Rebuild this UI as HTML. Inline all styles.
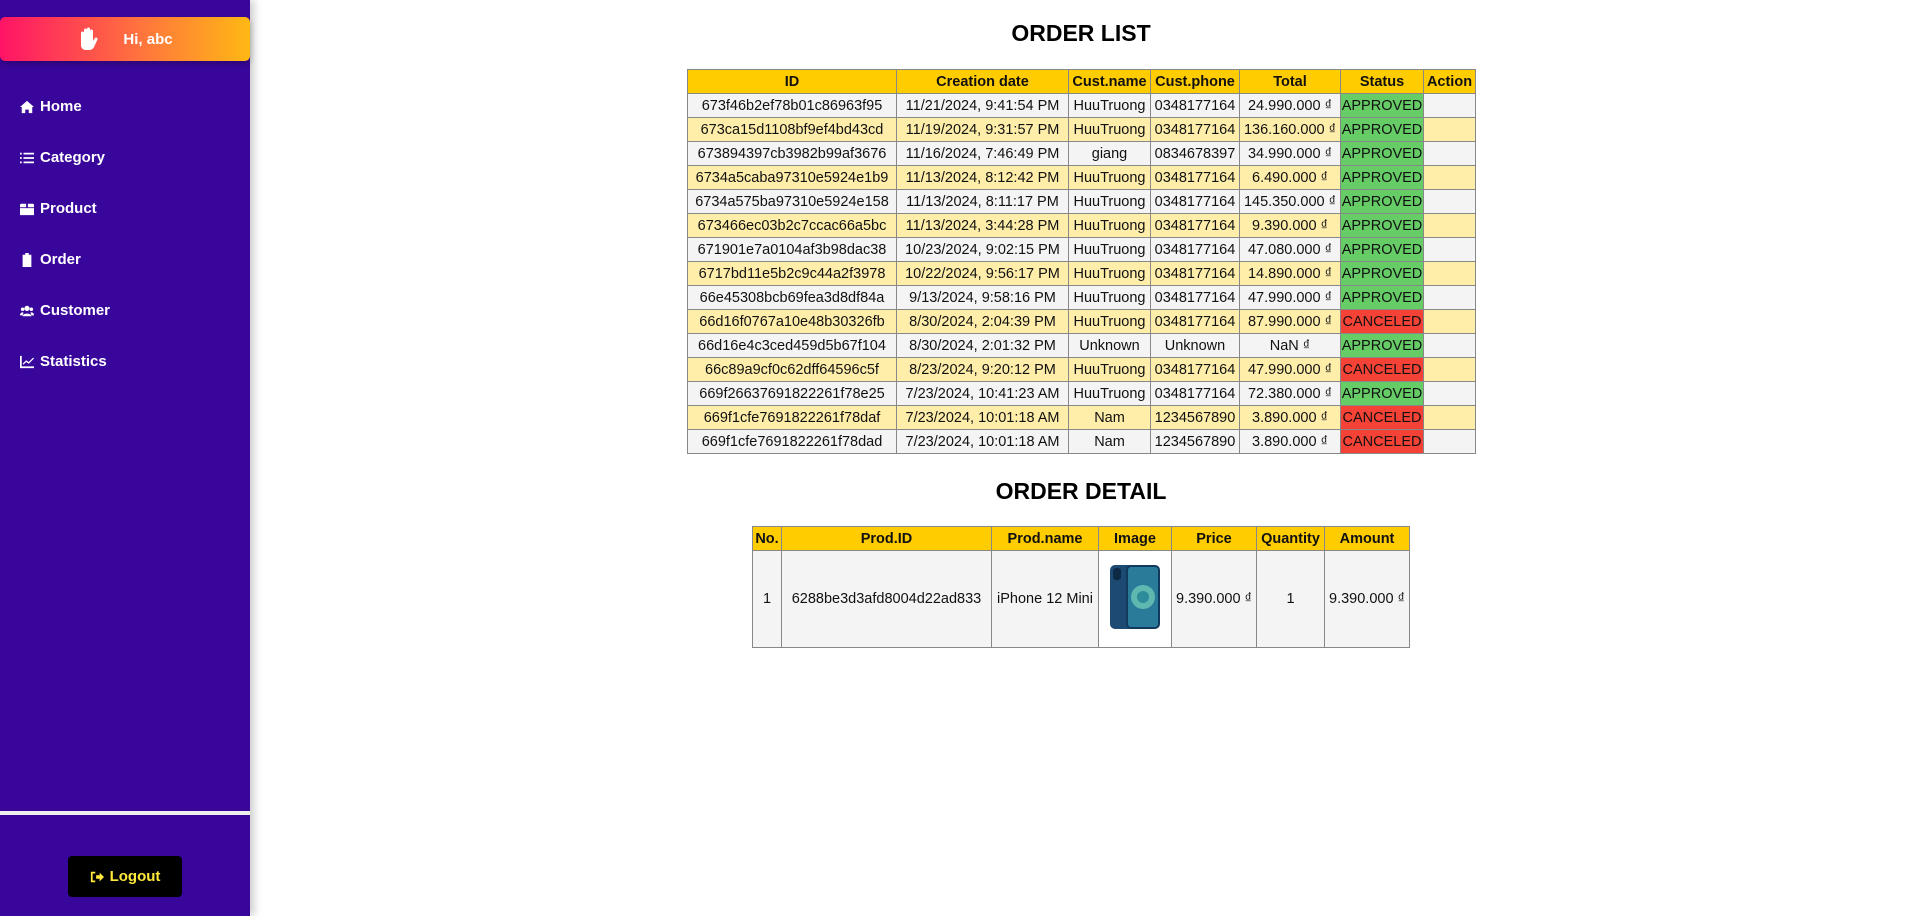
<!DOCTYPE html>
<html><head><meta charset="utf-8">
<style>
*{box-sizing:border-box;margin:0;padding:0}
body{width:1908px;height:916px;background:#fff;font-family:"Liberation Sans","DejaVu Sans",sans-serif;position:relative;overflow:hidden}
.side{position:absolute;left:0;top:0;width:250px;height:916px;background:#39069b;box-shadow:4px 0 8px rgba(0,0,0,.2)}
.hi{position:absolute;left:0;top:17px;width:250px;height:44px;border-radius:5px;background:linear-gradient(90deg,#ff1466,#ff7a3a 60%,#ffb814);color:#fff;font-weight:bold;font-size:15px;display:flex;align-items:center;justify-content:center;gap:24px;box-shadow:0 3px 6px rgba(0,0,0,.25)}
.nav{position:absolute;left:20px;color:#fff;font-weight:bold;font-size:15px;display:flex;align-items:center;gap:6px}
.nav svg{width:14px;height:14px;fill:#fff}
.div{position:absolute;left:0;top:811px;width:250px;height:4px;background:#eee}
.logout{position:absolute;left:68px;top:856px;width:114px;height:41px;background:#000;border-radius:4px;color:#ffe93a;font-weight:bold;font-size:15px;display:flex;align-items:center;justify-content:center;gap:6px}
h2{position:absolute;width:400px;text-align:center;font-size:23px;font-weight:bold;color:#000}
table{position:absolute;border-collapse:collapse;table-layout:fixed;font-size:14.5px;color:#111}
td,th{border:1px solid #888;text-align:center;white-space:nowrap;overflow:hidden;padding:0}
th{background:#ffcc00;font-weight:bold;height:24px}
td{height:24px}
tr.o td{background:#f4f4f4}
tr.e td{background:#ffeeaa}
tr td.ap{background:#6c6}
tr td.ca{background:#f44336}
</style></head><body>
<div class="side">
 <div class="hi"><svg width="22" height="24" viewBox="0 0 22 24"><path fill="#fff" d="M4 12V6a1.5 1.5 0 0 1 3 0v5V3a1.5 1.5 0 0 1 3 0v8V2a1.5 1.5 0 0 1 3 0v9V4a1.5 1.5 0 0 1 3 0v10l2-3a1.5 1.5 0 0 1 2.5 1.5L17 20c-1 2-3 3-5 3H9c-3 0-5-2-5-5z"/></svg><span>Hi, abc</span></div>
 <div class="nav" style="top:98px"><svg viewBox="0 0 16 16"><path d="M8 1 0 8h2v7h4v-4h4v4h4V8h2z"/></svg>Home</div>
 <div class="nav" style="top:149px"><svg viewBox="0 0 16 16"><path d="M0 2h2v2H0zM4 2h12v2H4zM0 7h2v2H0zM4 7h12v2H4zM0 12h2v2H0zM4 12h12v2H4z"/></svg>Category</div>
 <div class="nav" style="top:200px"><svg viewBox="0 0 16 16"><path d="M1 2h6v4H0V3zM9 2h6l1 1v3H9zM0 7h16v8H0z"/></svg>Product</div>
 <div class="nav" style="top:251px"><svg viewBox="0 0 16 16"><path d="M3 2h3V0h4v2h3v14H3zM5 6h6v1H5zM5 9h6v1H5zM5 12h6v1H5z"/></svg>Order</div>
 <div class="nav" style="top:302px"><svg viewBox="0 0 16 16"><circle cx="8" cy="5" r="3"/><circle cx="3" cy="6" r="2"/><circle cx="13" cy="6" r="2"/><path d="M3 14c0-4 10-4 10 0zM0 13c0-3 3-4 4-3l-1 3zM16 13c0-3-3-4-4-3l1 3z"/></svg>Customer</div>
 <div class="nav" style="top:353px"><svg viewBox="0 0 16 16"><path d="M0 1h2v12h14v2H0z"/><path d="M3 10l4-4 3 2 5-5 1 1-6 6-3-2-3 3z"/></svg>Statistics</div>
 <div class="div"></div>
 <div class="logout"><svg width="14" height="14" viewBox="0 0 16 16"><path fill="#ffe93a" d="M1 2h5v2H3v8h3v2H1zM7 6h4V3l5 5-5 5v-3H7z"/></svg>Logout</div>
</div>

<h2 style="left:881px;top:20px">ORDER LIST</h2>
<table style="left:687px;top:69px;width:788px">
<colgroup><col style="width:209px"><col style="width:172px"><col style="width:82px"><col style="width:89px"><col style="width:101px"><col style="width:83px"><col style="width:52px"></colgroup>
<tr><th>ID</th><th>Creation date</th><th>Cust.name</th><th>Cust.phone</th><th>Total</th><th>Status</th><th>Action</th></tr>
<tr class="o"><td>673f46b2ef78b01c86963f95</td><td>11/21/2024, 9:41:54 PM</td><td>HuuTruong</td><td>0348177164</td><td>24.990.000 ₫</td><td class="ap">APPROVED</td><td></td></tr>
<tr class="e"><td>673ca15d1108bf9ef4bd43cd</td><td>11/19/2024, 9:31:57 PM</td><td>HuuTruong</td><td>0348177164</td><td>136.160.000 ₫</td><td class="ap">APPROVED</td><td></td></tr>
<tr class="o"><td>673894397cb3982b99af3676</td><td>11/16/2024, 7:46:49 PM</td><td>giang</td><td>0834678397</td><td>34.990.000 ₫</td><td class="ap">APPROVED</td><td></td></tr>
<tr class="e"><td>6734a5caba97310e5924e1b9</td><td>11/13/2024, 8:12:42 PM</td><td>HuuTruong</td><td>0348177164</td><td>6.490.000 ₫</td><td class="ap">APPROVED</td><td></td></tr>
<tr class="o"><td>6734a575ba97310e5924e158</td><td>11/13/2024, 8:11:17 PM</td><td>HuuTruong</td><td>0348177164</td><td>145.350.000 ₫</td><td class="ap">APPROVED</td><td></td></tr>
<tr class="e"><td>673466ec03b2c7ccac66a5bc</td><td>11/13/2024, 3:44:28 PM</td><td>HuuTruong</td><td>0348177164</td><td>9.390.000 ₫</td><td class="ap">APPROVED</td><td></td></tr>
<tr class="o"><td>671901e7a0104af3b98dac38</td><td>10/23/2024, 9:02:15 PM</td><td>HuuTruong</td><td>0348177164</td><td>47.080.000 ₫</td><td class="ap">APPROVED</td><td></td></tr>
<tr class="e"><td>6717bd11e5b2c9c44a2f3978</td><td>10/22/2024, 9:56:17 PM</td><td>HuuTruong</td><td>0348177164</td><td>14.890.000 ₫</td><td class="ap">APPROVED</td><td></td></tr>
<tr class="o"><td>66e45308bcb69fea3d8df84a</td><td>9/13/2024, 9:58:16 PM</td><td>HuuTruong</td><td>0348177164</td><td>47.990.000 ₫</td><td class="ap">APPROVED</td><td></td></tr>
<tr class="e"><td>66d16f0767a10e48b30326fb</td><td>8/30/2024, 2:04:39 PM</td><td>HuuTruong</td><td>0348177164</td><td>87.990.000 ₫</td><td class="ca">CANCELED</td><td></td></tr>
<tr class="o"><td>66d16e4c3ced459d5b67f104</td><td>8/30/2024, 2:01:32 PM</td><td>Unknown</td><td>Unknown</td><td>NaN ₫</td><td class="ap">APPROVED</td><td></td></tr>
<tr class="e"><td>66c89a9cf0c62dff64596c5f</td><td>8/23/2024, 9:20:12 PM</td><td>HuuTruong</td><td>0348177164</td><td>47.990.000 ₫</td><td class="ca">CANCELED</td><td></td></tr>
<tr class="o"><td>669f26637691822261f78e25</td><td>7/23/2024, 10:41:23 AM</td><td>HuuTruong</td><td>0348177164</td><td>72.380.000 ₫</td><td class="ap">APPROVED</td><td></td></tr>
<tr class="e"><td>669f1cfe7691822261f78daf</td><td>7/23/2024, 10:01:18 AM</td><td>Nam</td><td>1234567890</td><td>3.890.000 ₫</td><td class="ca">CANCELED</td><td></td></tr>
<tr class="o"><td>669f1cfe7691822261f78dad</td><td>7/23/2024, 10:01:18 AM</td><td>Nam</td><td>1234567890</td><td>3.890.000 ₫</td><td class="ca">CANCELED</td><td></td></tr>
</table>

<h2 style="left:881px;top:478px">ORDER DETAIL</h2>
<table style="left:752px;top:526px;width:657px">
<colgroup><col style="width:29px"><col style="width:210px"><col style="width:107px"><col style="width:73px"><col style="width:85px"><col style="width:68px"><col style="width:85px"></colgroup>
<tr><th>No.</th><th>Prod.ID</th><th>Prod.name</th><th>Image</th><th>Price</th><th>Quantity</th><th>Amount</th></tr>
<tr class="o"><td style="height:97px">1</td><td>6288be3d3afd8004d22ad833</td><td>iPhone 12 Mini</td><td style="background:#fff"><svg width="54" height="68" viewBox="0 0 54 68"><rect x="2" y="2" width="40" height="64" rx="5" fill="#1d4a73"/><rect x="18" y="2" width="34" height="64" rx="5" fill="#123a5c"/><rect x="20" y="4" width="30" height="60" rx="3" fill="#2a7a9a"/><circle cx="35" cy="34" r="12" fill="#5fb8b0"/><circle cx="35" cy="34" r="6" fill="#2e8c9a"/><rect x="5" y="5" width="8" height="12" rx="3" fill="#0c2a44"/></svg></td><td>9.390.000 ₫</td><td>1</td><td>9.390.000 ₫</td></tr>
</table>
</body></html>
